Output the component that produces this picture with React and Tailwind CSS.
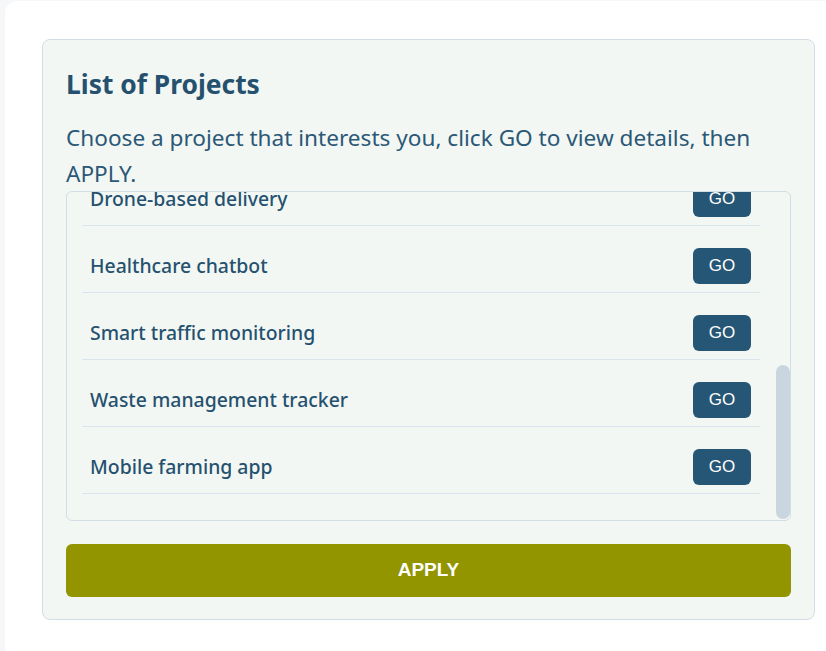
import React, { useEffect, useRef } from "react";

const projects = [
  "Online library system",
  "Student attendance tracker",
  "Weather prediction app",
  "E-commerce recommendation engine",
  "Smart home automation",
  "Drone-based delivery",
  "Healthcare chatbot",
  "Smart traffic monitoring",
  "Waste management tracker",
  "Mobile farming app",
];

const ProjectRow = ({ name }) => {
  return (
    <div className="flex items-center justify-between border-b border-[#dbe4ec] py-2 pl-2 pr-[9px] mb-[14px]">
      <span className="text-[19.4px] font-medium text-[#25516f]">{name}</span>
      <button
        type="button"
        className="h-9 w-[58px] rounded-md bg-[#265675] text-[17px] text-white font-['Liberation_Sans',Arial,sans-serif]"
      >
        GO
      </button>
    </div>
  );
};

const App = () => {
  const listRef = useRef(null);

  useEffect(() => {
    // start scrolled to the end of the list
    if (listRef.current) {
      listRef.current.scrollTop = listRef.current.scrollHeight;
    }
  }, []);

  return (
    <div className="h-[651px] w-[826px] overflow-hidden bg-[#f5f7f9] font-['Noto_Sans',sans-serif]">
      {/* White page card */}
      <div className="ml-[5px] mt-[1px] w-[900px] h-[700px] rounded-tl-xl bg-white pl-[37px] pt-[38px]">
        {/* Projects panel */}
        <div className="w-[773px] rounded-lg border border-[#d3dde6] bg-[#f3f7f4] px-[23px] pt-[29px] pb-[22px]">
          <h2 className="text-[26.4px] font-bold leading-[31px] text-[#25516f]">
            List of Projects
          </h2>
          <p className="mt-[20px] -mb-[1px] text-[22.6px] leading-[36px] text-[#2b5876]">
            Choose a project that interests you, click GO to view details, then
            APPLY.
          </p>

          {/* List box with its scrollbar */}
          <div className="flex h-[330px] rounded-md border border-[#d3dde6]">
            <div
              ref={listRef}
              className="flex-1 overflow-hidden pl-[15px] pr-4 pt-4 pb-[12px]"
            >
              {projects.map((p, i) => (
                <ProjectRow key={i} name={p} />
              ))}
            </div>
            <div className="flex w-[14px] flex-col justify-end pb-[1px]">
              <div className="h-[154px] rounded-full bg-[#c9d6e0]" />
            </div>
          </div>

          <button
            type="button"
            className="mt-[23px] h-[53px] w-full rounded-md bg-[#929400] text-[19px] font-bold text-white font-['Liberation_Sans',Arial,sans-serif]"
          >
            APPLY
          </button>
        </div>
      </div>
    </div>
  );
};

export default App;
